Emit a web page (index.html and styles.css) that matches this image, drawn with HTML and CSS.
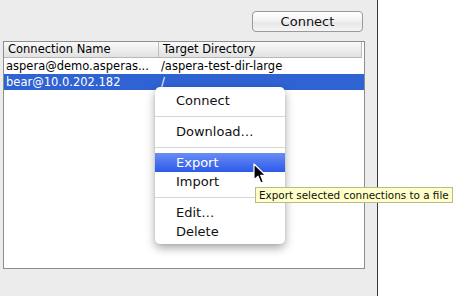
FILE: index.html
```html
<!DOCTYPE html>
<html lang="en">
<head>
    <meta charset="UTF-8">
    <title>Connections</title>
    <link rel="stylesheet" href="styles.css">
</head>
<body>
    <div class="panel">
        <div class="toolbar">
            <button class="btn">Connect</button>
        </div>
        <div class="table">
            <div class="head">
                <div class="cell col-name">Connection Name</div>
                <div class="cell col-dir">Target Directory</div>
            </div>
            <div class="row">
                <div class="cell col-name">aspera@demo.asperas...</div>
                <div class="cell col-dir">/aspera-test-dir-large</div>
            </div>
            <div class="row selected">
                <div class="cell col-name">bear@10.0.202.182</div>
                <div class="cell col-dir">/</div>
            </div>
        </div>
    </div>
    <div class="blank"></div>

    <div class="menu">
        <div class="item">Connect</div>
        <div class="sep"></div>
        <div class="item">Download…</div>
        <div class="sep"></div>
        <div class="item active">Export</div>
        <div class="item">Import</div>
        <div class="sep"></div>
        <div class="item">Edit…</div>
        <div class="item">Delete</div>
    </div>

    <div class="tooltip">Export selected connections to a file</div>

    <svg class="cursor" width="14" height="22" viewBox="0 0 14 22">
        <path d="M1 1 L1 17 L5 13.2 L7.8 20 L10.4 18.9 L7.7 12.3 L12.6 12.3 Z" fill="#000" stroke="#fff" stroke-width="1.2" stroke-linejoin="round"/>
    </svg>
</body>
</html>
```

FILE: styles.css
```css
body {
    margin: 0;
    width: 469px;
    height: 296px;
    display: flex;
    overflow: hidden;
    font-family: "DejaVu Sans", sans-serif;
    color: #000;
    position: relative;
}

.panel {
    width: 377px;
    height: 296px;
    background: #ececec;
    border-right: 1px solid #3a3a3a;
}

.blank {
    flex: 1;
    background: #fff;
}

.toolbar {
    display: flex;
    justify-content: flex-end;
    padding: 11px 14px 0 0;
}

.btn {
    width: 111px;
    height: 21px;
    border: 1px solid #9a9a9a;
    border-radius: 4px;
    background: linear-gradient(#ffffff, #f1f1f1 50%, #e6e6e6 51%, #f4f4f4);
    font-family: "DejaVu Sans", sans-serif;
    font-size: 13px;
    color: #111;
    padding: 0;
}

.table {
    margin: 9px 0 0 3px;
    width: 360px;
    height: 226px;
    background: #fff;
    border: 1px solid #8d8d8d;
    font-size: 11.5px;
}

.head {
    display: flex;
    height: 15px;
    line-height: 15px;
    background: linear-gradient(#fafafa, #ededed 50%, #e2e2e2);
    border-bottom: 1px solid #b8b8b8;
    margin-right: 2px;
    border-right: 1px solid #bdbdbd;
}

.head .col-name {
    width: 150px;
    border-right: 1px solid #bdbdbd;
    padding-left: 4px;
}

.head .col-dir {
    padding-left: 4px;
}

.row {
    display: flex;
    height: 16px;
    line-height: 16px;
}

.cell {
    white-space: nowrap;
    overflow: hidden;
}

.col-name {
    width: 153px;
    padding-left: 2px;
}

.col-dir {
    flex: 1;
    padding-left: 2px;
}

.selected {
    background: #2f62d3;
    color: #fff;
}

.menu {
    position: absolute;
    left: 155px;
    top: 87px;
    width: 130px;
    padding: 4px 0 3px;
    background: rgba(255, 255, 255, 0.97);
    border-radius: 5px;
    box-shadow: 0 4px 10px rgba(0, 0, 0, 0.35), 0 0 1px rgba(0, 0, 0, 0.3);
    font-size: 13px;
}

.item {
    height: 19px;
    line-height: 19px;
    padding-left: 21px;
    color: #111;
}

.item.active {
    background: linear-gradient(#6a8cf3, #2b5ae9);
    color: #fff;
}

.sep {
    height: 1px;
    margin: 6px 0 5px;
    background: #d6d6d6;
}

.tooltip {
    position: absolute;
    left: 255px;
    top: 187px;
    height: 14px;
    line-height: 14px;
    padding: 0 3px;
    background: #ffffc7;
    border: 1px solid #b9b98c;
    font-size: 10.4px;
    color: #111;
    white-space: nowrap;
}

.cursor {
    position: absolute;
    left: 253px;
    top: 163px;
}
```
